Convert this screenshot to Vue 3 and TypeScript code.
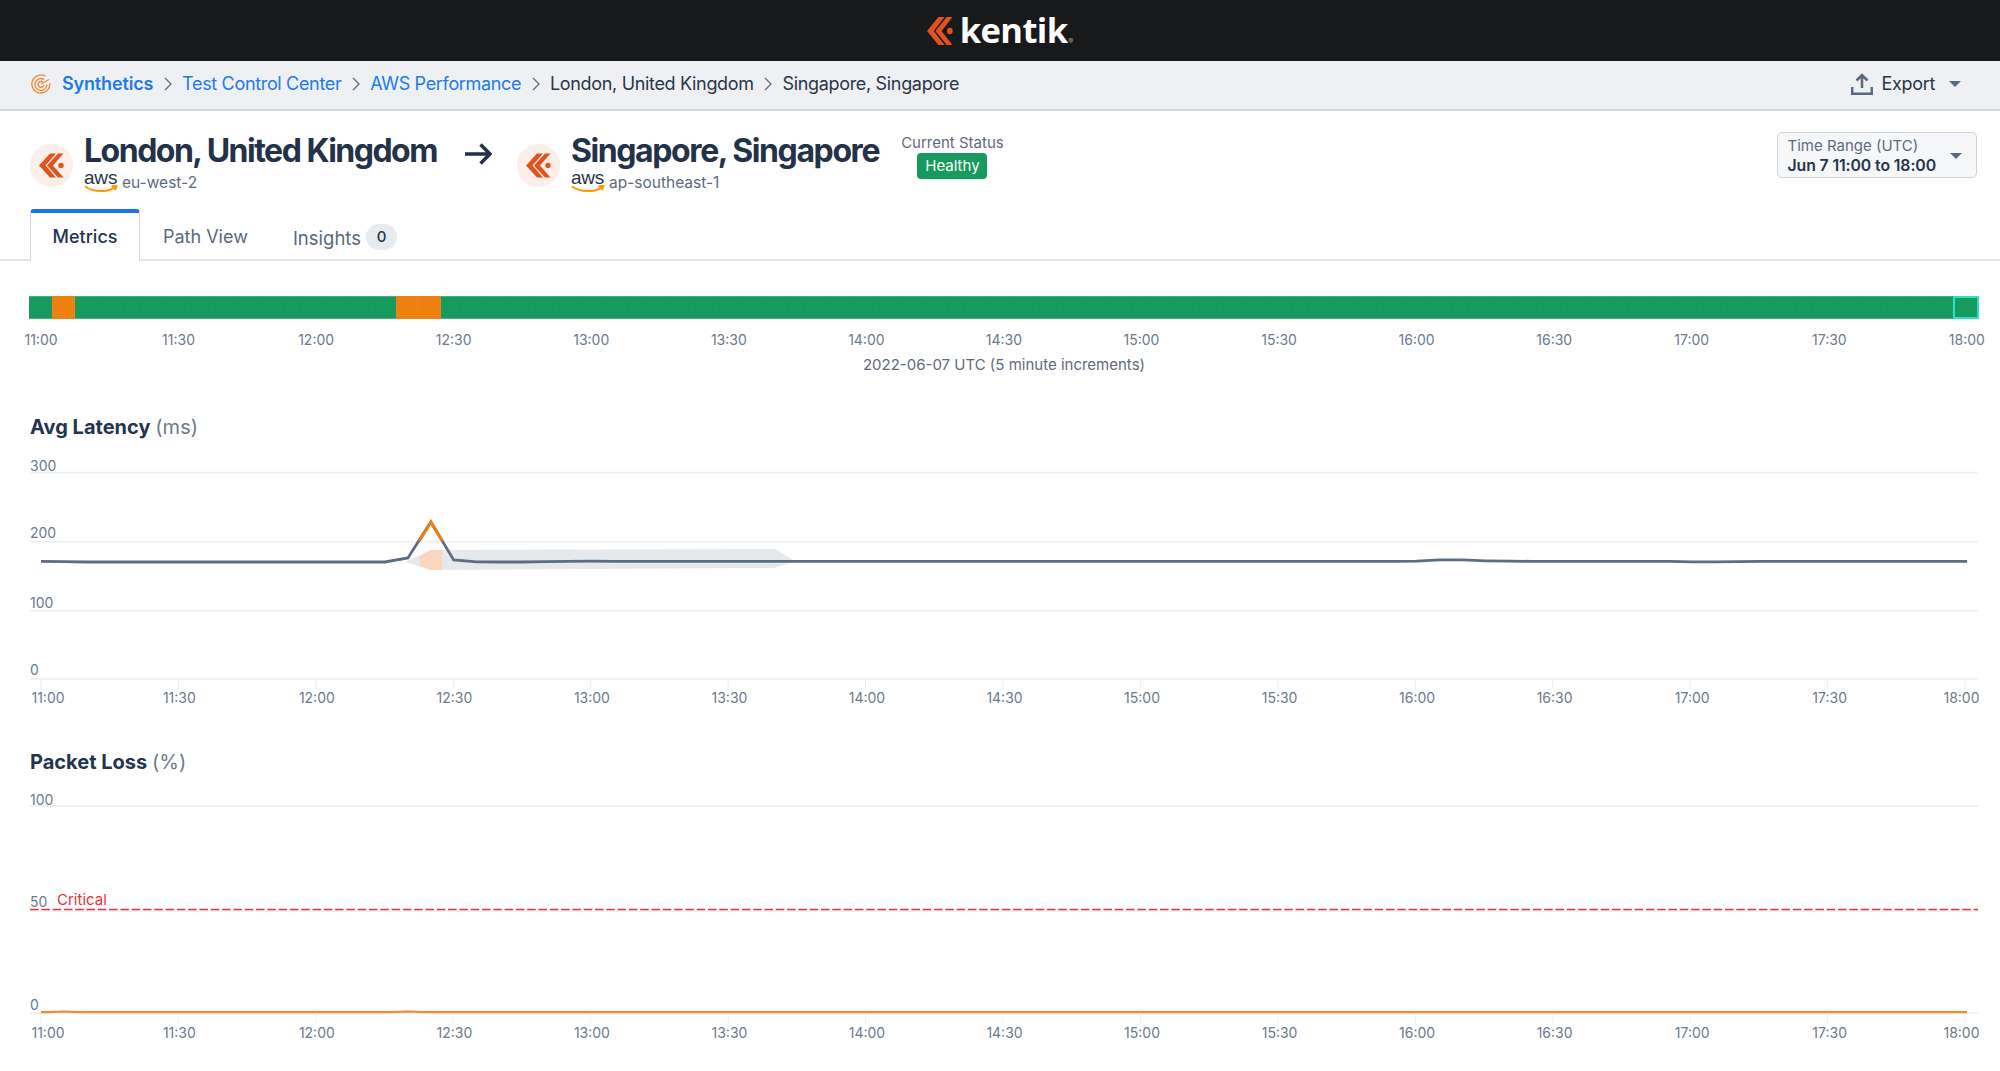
<script setup lang="ts">
const times: string[] = []
for (let h = 11; h <= 18; h++) {
  times.push(`${h}:00`)
  if (h < 18) times.push(`${h}:30`)
}

const segments = Array.from({ length: 85 }, (_, i) => ({
  warn: i === 1 || i === 16 || i === 17,
  current: i === 84
}))

const tickX = (i: number) => 41 + i * 137.43
const labelX = (i: number) => {
  if (i === 0) return 48
  if (i === 14) return 1961.5
  return tickX(i) + 0.8 + i * 0.1
}

const overrides: Record<number, number> = {
  0: 561.3, 1: 561.7, 15: 562, 16: 558, 17: 522, 18: 560, 19: 561.8, 20: 562, 21: 562,
  22: 561.6, 23: 561.4, 24: 561.2, 60: 561.2, 61: 559.8, 62: 559.9, 63: 560.8, 64: 561.2,
  70: 561.4, 72: 561.9, 73: 561.9, 74: 561.6
}
const latencyPoints = Array.from({ length: 85 }, (_, i) => {
  const y = overrides[i] ?? (i < 15 ? 562 : 561.3)
  return `${(41 + i * 22.93).toFixed(1)},${y}`
}).join(' ')

const latencyGrid = [
  { label: '300', text: 471, line: 472.5 },
  { label: '200', text: 538, line: 541.7 },
  { label: '100', text: 608, line: 610.7 },
  { label: '0', text: 675, line: 679 }
]
const lossGrid = [
  { label: '100', text: 805, line: 806 },
  { label: '50', text: 907, line: 911 },
  { label: '0', text: 1010, line: 1013 }
]
</script>

<template>
  <div class="page">
    <header class="topbar">
      <svg class="logo-mark" viewBox="9 9.5 25 24" preserveAspectRatio="none" aria-hidden="true">
        <path class="chev" d="M20 9.5h6L15.5 21.5 26 33.5h-6L9 21.5zM28 9.5h5.500L23 21.5l10.500 12H28L17 21.500z" />
        <circle class="chev" cx="31" cy="21.500" r="2.700" />
      </svg>
      <span class="logo-text">kentik</span><span class="logo-reg">®</span>
    </header>

    <nav class="crumbs">
      <svg class="radar" viewBox="0 0 20 20" aria-hidden="true">
        <path d="M14.500 2.300A9 9 0 1 0 18.800 9" />
        <path d="M13 5.400A6 6 0 1 0 15.900 10.500" />
        <path d="M11.800 7.900A3 3 0 1 0 12.900 10.800" />
        <path d="M10 10L18 5.500" />
      </svg>
      <a class="crumb strong">Synthetics</a>
      <svg class="sep" viewBox="0 0 8 14" aria-hidden="true"><path d="M1 1l6 6-6 6" /></svg>
      <a class="crumb">Test Control Center</a>
      <svg class="sep" viewBox="0 0 8 14" aria-hidden="true"><path d="M1 1l6 6-6 6" /></svg>
      <a class="crumb">AWS Performance</a>
      <svg class="sep" viewBox="0 0 8 14" aria-hidden="true"><path d="M1 1l6 6-6 6" /></svg>
      <span class="crumb plain">London, United Kingdom</span>
      <svg class="sep" viewBox="0 0 8 14" aria-hidden="true"><path d="M1 1l6 6-6 6" /></svg>
      <span class="crumb plain">Singapore, Singapore</span>
      <div class="export">
        <svg class="upload" viewBox="0 0 22 22" aria-hidden="true">
          <path d="M11 15V2M5.500 7.500L11 2l5.500 5.500M1.200 14v6.800h19.600V14" />
        </svg>
        <span>Export</span>
        <i class="caret"></i>
      </div>
    </nav>

    <section class="head">
      <div class="endpoint">
        <svg class="agent" viewBox="0 0 43 43" aria-hidden="true">
          <circle cx="21.500" cy="21.500" r="21.500" fill="#fceee8" />
          <path class="chev" d="M20 9.500h6L15.500 21.500 26 33.500h-6L9 21.500zM28 9.500h5.500L23 21.500l10.500 12H28L17 21.500z" />
          <circle class="chev" cx="31" cy="21.500" r="2.700" />
        </svg>
        <div>
          <h1>London, United Kingdom</h1>
          <div class="region">
            <span class="aws">aws<svg viewBox="0 0 34 8" aria-hidden="true"><path d="M1 1.500c9 6 22 6 30 .8M27.500 1.200l5-.4-1.500 4.500" /></svg></span>
            <span>eu-west-2</span>
          </div>
        </div>
      </div>
      <svg class="arrow" viewBox="0 0 28 22" aria-hidden="true"><path d="M1 11h25M16.500 1.500L26 11l-9.500 9.500" /></svg>
      <div class="endpoint">
        <svg class="agent" viewBox="0 0 43 43" aria-hidden="true">
          <circle cx="21.500" cy="21.500" r="21.500" fill="#fceee8" />
          <path class="chev" d="M20 9.500h6L15.500 21.500 26 33.500h-6L9 21.500zM28 9.500h5.500L23 21.500l10.500 12H28L17 21.500z" />
          <circle class="chev" cx="31" cy="21.500" r="2.700" />
        </svg>
        <div>
          <h1 class="tight">Singapore, Singapore</h1>
          <div class="region">
            <span class="aws">aws<svg viewBox="0 0 34 8" aria-hidden="true"><path d="M1 1.500c9 6 22 6 30 .8M27.500 1.200l5-.4-1.500 4.500" /></svg></span>
            <span>ap-southeast-1</span>
          </div>
        </div>
      </div>
      <div class="status">
        <span>Current Status</span>
        <b>Healthy</b>
      </div>
      <button class="range">
        <span class="range-text">
          <span>Time Range (UTC)</span>
          <strong>Jun 7 11:00 to 18:00</strong>
        </span>
        <i class="caret"></i>
      </button>
    </section>

    <div class="tabs">
      <div class="tab active">Metrics</div>
      <div class="tab">Path View</div>
      <div class="tab insights">Insights <span class="count">0</span></div>
    </div>

    <section class="timeline">
      <div class="bar">
        <span
          v-for="(s, i) in segments"
          :key="i"
          class="seg"
          :class="{ warn: s.warn, current: s.current }"
        ></span>
      </div>
      <div class="bar-times">
        <span v-for="t in times" :key="t"><em>{{ t }}</em></span>
      </div>
      <p class="date">2022-06-07 UTC (5 minute increments)</p>
    </section>

    <h2 class="chart-title first">Avg Latency <small>(ms)</small></h2>
    <svg class="chart" viewBox="29 455 1950 255" aria-label="Average latency chart">
      <g v-for="g in latencyGrid" :key="g.label">
        <line class="grid" x1="30" x2="1978" :y1="g.line" :y2="g.line" />
        <text class="tick-text" x="30" :y="g.text">{{ g.label }}</text>
      </g>
      <polygon class="band" points="405,562 431,550 775,549 795,561 775,568 431,570" />
      <polygon class="band-warn" points="420,556 431,550 442,550 442,570 431,570 420,566" />
      <polyline class="line" :points="latencyPoints" />
      <polyline class="line-warn" points="419.500,541 431,522 442.500,541" />
      <g v-for="(t, i) in times" :key="t">
        <line class="grid thin" :x1="tickX(i)" :x2="tickX(i)" y1="679" y2="689" />
        <text class="tick-text mid" :x="labelX(i)" y="703">{{ t }}</text>
      </g>
    </svg>

    <h2 class="chart-title">Packet Loss <small>(%)</small></h2>
    <svg class="chart" viewBox="29 790 1950 255" aria-label="Packet loss chart">
      <g v-for="g in lossGrid" :key="g.label">
        <line class="grid" x1="30" x2="1978" :y1="g.line" :y2="g.line" />
        <text class="tick-text" x="30" :y="g.text">{{ g.label }}</text>
      </g>
      <line class="critical" x1="30" x2="1978" y1="909.500" y2="909.500" />
      <text class="critical-text" x="57" y="904.500">Critical</text>
      <path class="loss" d="M41 1012.200H50L63 1011.500L78 1012.200H390L408 1011.500L428 1012.200H1967" />
      <g v-for="(t, i) in times" :key="t">
        <line class="grid thin" :x1="tickX(i)" :x2="tickX(i)" y1="1013" y2="1023" />
        <text class="tick-text mid" :x="labelX(i)" y="1038">{{ t }}</text>
      </g>
    </svg>
  </div>
</template>

<style>
html,
body {
  margin: 0;
  background: #fff;
  overflow: hidden;
}
</style>

<style scoped>
.page {
  width: 2000px;
  height: 1071px;
  overflow: hidden;
  font-family: Inter, "Noto Sans", sans-serif;
  font-size: 16px;
  color: #24344e;
}
.topbar {
  height: 61px;
  background: #18191b;
  display: flex;
  align-items: flex-start;
  justify-content: center;
  box-sizing: border-box;
}
.logo-mark {
  width: 26px;
  height: 28px;
  margin: 17px 7px 0 0;
}
.chev {
  fill: #e2521f;
}
.logo-text {
  font-family: "Open Sans", sans-serif;
  font-weight: 700;
  font-size: 34.500px;
  line-height: 60px;
  letter-spacing: -0.6px;
  color: #fff;
}
.logo-reg {
  font-size: 7px;
  color: #a8aaad;
  margin: 38px 0 0 1px;
  line-height: 8px;
}
.crumbs {
  height: 50px;
  box-sizing: border-box;
  background: #eff0f4;
  border-bottom: 2px solid #d5d7dc;
  display: flex;
  align-items: center;
  padding: 0 23px 3px 31px;
  font-size: 18px;
  letter-spacing: -0.33px;
}
.radar {
  width: 20px;
  height: 20px;
  margin-right: 11px;
  fill: none;
  stroke: #ee8a2f;
  stroke-width: 1.300;
}
.crumb {
  color: #1c7ce8;
}
.crumb.strong {
  font-weight: 600;
  letter-spacing: -0.15px;
}
.crumb.plain {
  color: #2a3648;
}
.sep {
  width: 8px;
  height: 14px;
  margin: 0 10.400px;
  fill: none;
  stroke: #5f6b7c;
  stroke-width: 1.300;
}
.export {
  margin-left: auto;
  display: flex;
  align-items: center;
  color: #2a3648;
}
.upload {
  width: 22px;
  height: 22px;
  margin-right: 9px;
  fill: none;
  stroke: #5a6a7e;
  stroke-width: 2.500;
}
.caret {
  display: block;
  width: 0;
  height: 0;
  border-left: 6px solid transparent;
  border-right: 6px solid transparent;
  border-top: 6.500px solid #5a6a7e;
}
.export .caret {
  margin-left: 14px;
  margin-right: 16px;
}
.head {
  height: 98px;
  box-sizing: border-box;
  padding: 21px 23px 0 30px;
  display: flex;
  align-items: flex-start;
}
.endpoint {
  display: flex;
  align-items: flex-start;
  gap: 11px;
}
.agent {
  width: 43px;
  height: 43px;
  margin-top: 12px;
  flex: none;
}
h1 {
  margin: 0;
  font-size: 32px;
  line-height: 38px;
  font-weight: 700;
  letter-spacing: -1.5px;
  color: #233248;
  white-space: nowrap;
}
h1.tight {
  letter-spacing: -1.400px;
}
.region {
  display: flex;
  align-items: flex-start;
  gap: 5px;
  font-size: 15.500px;
  line-height: 26px;
  color: #5f6b7c;
}
.aws {
  position: relative;
  display: block;
  width: 33px;
  height: 22px;
  font-family: "Liberation Sans", sans-serif;
  font-size: 19px;
  line-height: 15px;
  letter-spacing: -0.2px;
  color: #2a3648;
}
.aws svg {
  position: absolute;
  left: 0;
  top: 15px;
  width: 34px;
  height: 8px;
  fill: none;
  stroke: #f90;
  stroke-width: 2;
}
.arrow {
  width: 28px;
  height: 22px;
  margin: 11px 25px 0 27px;
  flex: none;
  fill: none;
  stroke: #233248;
  stroke-width: 3.500;
}
.status {
  margin: 1px 0 0 22px;
  display: flex;
  flex-direction: column;
  align-items: center;
  font-size: 15px;
  line-height: 20px;
  color: #5f6b7c;
  white-space: nowrap;
}
.status b {
  width: 70px;
  height: 26px;
  border-radius: 4px;
  background: #169a5e;
  color: #fff;
  font-weight: 400;
  line-height: 26px;
  text-align: center;
}
.range {
  margin: 0 0 0 auto;
  width: 200px;
  height: 46px;
  box-sizing: border-box;
  padding: 1px 14px 0 9.500px;
  border: 1.500px solid #cfd2d6;
  border-radius: 5px;
  background: #f6f7f9;
  display: flex;
  align-items: center;
  justify-content: space-between;
  font-family: inherit;
  text-align: left;
}
.range-text {
  display: flex;
  flex-direction: column;
  font-size: 15px;
  line-height: 20px;
  color: #5f6b7c;
  white-space: nowrap;
}
.range-text strong {
  font-size: 15.800px;
  letter-spacing: -0.1px;
  font-weight: 600;
  color: #24344e;
}
.tabs {
  height: 52px;
  box-sizing: border-box;
  border-bottom: 2px solid #e2e4e7;
  padding-left: 30px;
  display: flex;
  font-size: 18px;
}
.tab {
  padding: 0 23px;
  line-height: 56px;
  color: #5a6a7e;
  white-space: nowrap;
}
.tab.active {
  width: 110px;
  height: 52px;
  box-sizing: border-box;
  padding: 0;
  text-align: center;
  line-height: 47px;
  color: #24344e;
  font-weight: 500;
  background: #fff;
  border: 1.500px solid #d5d8dc;
  border-top: 4px solid #1c73e8;
  border-bottom: none;
  border-radius: 4px 4px 0 0;
}
.insights {
  display: flex;
  align-items: center;
  gap: 5px;
  padding-left: 22px;
  line-height: 1;
  padding-top: 8px;
  height: 50px;
  box-sizing: border-box;
  font-size: 18.500px;
}
.count {
  width: 31px;
  height: 26px;
  margin-top: -3px;
  border-radius: 13px;
  background: #e8ebee;
  color: #24344e;
  font-size: 15px;
  font-weight: 500;
  line-height: 26px;
  text-align: center;
}
.timeline {
  padding-top: 35px;
}
.bar {
  margin: 0 21px 0 29px;
  height: 23px;
  display: flex;
  background: #169a5e;
}
.seg {
  flex: 1;
  box-sizing: border-box;
  background: #169a5e;
  border-top: 1px solid #46b083;
  border-bottom: 1px solid #46b083;
  border-right: 1px solid #1b9c62;
}
.seg.warn {
  background: #ee8012;
  border-color: #ee8012;
  border-right-color: #ee8518;
}
.seg.current {
  border: 2.500px solid #2ce0c4;
}
.bar-times {
  margin: 12px 33px 0 41px;
  height: 18px;
  display: flex;
  justify-content: space-between;
  font-size: 14px;
  line-height: 18px;
  color: #6b7a8c;
}
.bar-times span {
  width: 0;
  display: flex;
  justify-content: center;
}
.bar-times em {
  font-style: normal;
}
.date {
  margin: 6px 0 0;
  padding-left: 8px;
  text-align: center;
  font-size: 15px;
  line-height: 20px;
  color: #5f6b7c;
}
.chart-title {
  margin: 40px 0 16px 30px;
  font-size: 20px;
  line-height: 24px;
  font-weight: 700;
  color: #24344e;
}
.chart-title.first {
  margin-top: 40px;
}
.chart-title small {
  font-size: 20px;
  font-weight: 400;
  letter-spacing: 0.1px;
  color: #6b7a8c;
}
.chart {
  display: block;
  margin-left: 29px;
  width: 1950px;
  height: 255px;
  overflow: hidden;
}
.grid {
  stroke: #ebedef;
  stroke-width: 1.500;
}
.grid.thin {
  stroke-width: 1;
}
.tick-text {
  font-family: Inter, sans-serif;
  font-size: 14px;
  fill: #6b7a8c;
}
.tick-text.mid {
  text-anchor: middle;
}
.band {
  fill: #e6e9ec;
}
.band-warn {
  fill: #f9d6bd;
}
.line {
  fill: none;
  stroke: #5d6d80;
  stroke-width: 2.800;
}
.line-warn {
  fill: none;
  stroke: #ee8012;
  stroke-width: 2.800;
}
.critical {
  stroke: #e5343a;
  stroke-width: 1.500;
  stroke-dasharray: 8.500 2.800;
}
.critical-text {
  font-family: Inter, sans-serif;
  font-size: 15px;
  fill: #e5343a;
}
.loss {
  fill: none;
  stroke: #f58a2c;
  stroke-width: 2.200;
}
</style>
